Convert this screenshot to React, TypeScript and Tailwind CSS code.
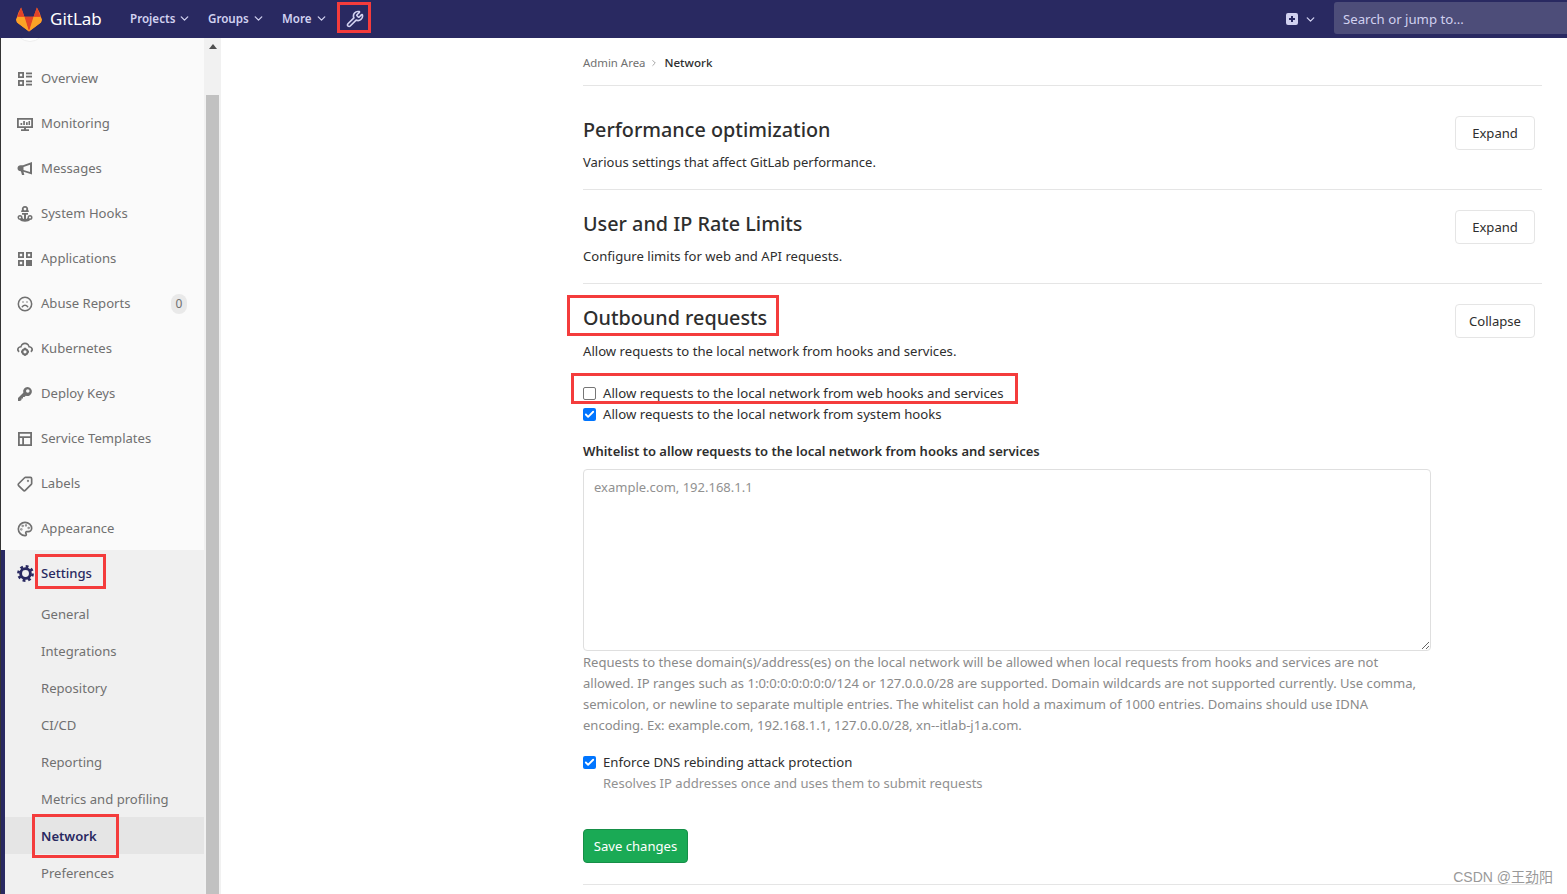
import React from "react";
import { Wrench, ChevronDown, Frown, Tag, Palette, ChevronRight, Check } from "lucide-react";

const Ic = ({ children }: { children: React.ReactNode }) => (
  <svg width="16" height="16" viewBox="0 0 16 16" fill="currentColor" className="shrink-0">{children}</svg>
);

const OverviewIcon = () => (
  <Ic>
    <path fillRule="evenodd" d="M1 1h6v6H1V1zm1.800 1.800v2.400h2.400V2.800H2.800zM1 9h6v6H1V9zm1.800 1.800v2.400h2.400v-2.400H2.800z" />
    <rect x="9" y="1.500" width="6" height="1.800" /><rect x="9" y="4.700" width="6" height="1.800" />
    <rect x="9" y="9.500" width="6" height="1.800" /><rect x="9" y="12.700" width="6" height="1.800" />
  </Ic>
);
const MonitorIcon = () => (
  <Ic>
    <path fillRule="evenodd" d="M0 2h16v10H9v1.200h3V15H4v-1.800h3V12H0V2zm1.800 1.800v6.400h12.400V3.800H1.800z" />
    <rect x="3.500" y="7" width="1.700" height="2" /><rect x="6.200" y="5" width="1.700" height="4" /><rect x="9" y="6.200" width="1.700" height="2.800" /><rect x="11.500" y="5" width="1.500" height="4" />
  </Ic>
);
const MegaphoneIcon = () => (
  <Ic>
    <path fillRule="evenodd" d="M15 1v12.500L6.500 10.800 7.300 14H5L3.900 10.300C2 10.200.5 9.300.5 7.300S2 4.200 3.500 4.200H6L15 1zm-2 2.700L6.500 5.900v3l6.500 2V3.700z" />
  </Ic>
);
const HookIcon = () => (
  <Ic>
    <path fillRule="evenodd" d="M8 0a3.200 3.200 0 0 1 3 4.300l.8.100V6H4.200V4.400L5 4.300A3.200 3.200 0 0 1 8 0zm0 1.700a1.400 1.400 0 1 0 0 2.800 1.400 1.400 0 0 0 0-2.800z" />
    <rect x="5" y="7" width="6" height="1.700" />
    <path d="M7 8h2v6H7z" />
    <path fillRule="evenodd" d="M3 9a2.500 2.500 0 0 1 2.500 2.500c0 .9.600 1.500 2.500 1.500s2.500-.6 2.500-1.500A2.500 2.500 0 1 1 13 14c-.7 1-2.500 1.700-5 1.700S3.700 15 3 14a2.500 2.500 0 0 1 0-5zm0 1.500a1 1 0 1 0 0 2 1 1 0 0 0 0-2zm10 0a1 1 0 1 0 0 2 1 1 0 0 0 0-2z" />
  </Ic>
);
const AppsIcon = () => (
  <Ic>
    <path fillRule="evenodd" d="M1 1h6v6H1V1zm1.800 1.800v2.400h2.400V2.800H2.800zM9 1h6v6H9V1zm1.800 1.800v2.400h2.400V2.800h-2.400zM1 9h6v6H1V9zm1.800 1.800v2.400h2.400v-2.400H2.800z" />
    <rect x="9" y="9" width="6" height="6" />
  </Ic>
);
const KubeIcon = () => (
  <Ic>
    <path fillRule="evenodd" d="M8 1.500c2.300 0 4 1.400 4.500 3.400C14.500 5.200 16 6.700 16 8.500c0 1.300-.7 2.300-1.800 2.900l-.8-1.500c.6-.3.900-.8.900-1.400 0-1-.9-1.900-2.100-1.900h-.8l-.1-.8C11 4.300 9.700 3.200 8 3.200S5 4.300 4.700 5.800l-.1.800h-.8c-1.200 0-2.100.9-2.100 1.900 0 .6.300 1.100.9 1.400l-.8 1.500C.7 10.800 0 9.800 0 8.500c0-1.800 1.500-3.300 3.500-3.600C4 2.900 5.700 1.500 8 1.500z" />
    <circle cx="8" cy="10.800" r="2.600" fill="none" stroke="currentColor" strokeWidth="2" />
    <path d="M7 6.800h2v1.500H7zM7 13.200h2v1.600H7zM4 9.800h1.400v2H4zM10.600 9.800H12v2h-1.400z" />
  </Ic>
);
const KeyIcon = () => (
  <Ic>
    <path fillRule="evenodd" d="M10.500 1a4.500 4.500 0 1 1-1.700 8.700L7.500 11H6v1.500H4.500V14L3 15H1v-3l5.300-5.300A4.500 4.500 0 0 1 10.500 1zm.3 2.200a1.800 1.800 0 1 0 0 3.600 1.800 1.800 0 0 0 0-3.600z" />
  </Ic>
);
const TemplateIcon = () => (
  <Ic>
    <path fillRule="evenodd" d="M1 1h14v14H1V1zm1.800 1.800v2.400h10.400V2.800H2.800zm0 4.200v6.200h2.400V7H2.800zm4.200 0v6.200h6.200V7H7z" />
  </Ic>
);
const GearIcon = () => (
  <svg width="17" height="17" viewBox="0 0 16 16" fill="none" stroke="currentColor" className="shrink-0">
    <circle cx="8" cy="8" r="4.600" strokeWidth="2.700" />
    <circle cx="8" cy="8" r="6.700" strokeWidth="2.400" strokeDasharray="2.630 2.630" />
  </svg>
);

const Gitlab = () => (
  <svg width="26" height="25" viewBox="0 0 26 25">
    <path fill="#fc6d26" d="M13 24.500 1 15.500.1 12.700 2.400 5.500l2.700-5 3.300 9.200h9.200l3.300-9.200 2.700 5 2.300 7.200-.900 2.800z" />
    <path fill="#e24329" d="M13 24.500 8.400 9.700h9.200L13 24.500z" />
    <path fill="#fca326" d="M1.500 9.700H8.400L13 24.500 1 15.500.1 12.700zM24.500 9.700h-6.900L13 24.500l12-9 .900-2.800z" />
    <path fill="#e24329" d="M1.500 9.700h6.900L5.100.5zM24.500 9.700h-6.900L20.900.5z" />
  </svg>
);

const items: [string, React.ReactNode][] = [
  ["Overview", <OverviewIcon />],
  ["Monitoring", <MonitorIcon />],
  ["Messages", <MegaphoneIcon />],
  ["System Hooks", <HookIcon />],
  ["Applications", <AppsIcon />],
  ["Abuse Reports", <Frown size={16} strokeWidth={2.3} className="shrink-0" />],
  ["Kubernetes", <KubeIcon />],
  ["Deploy Keys", <KeyIcon />],
  ["Service Templates", <TemplateIcon />],
  ["Labels", <Tag size={16} strokeWidth={2.5} className="shrink-0 -scale-x-100" />],
  ["Appearance", <Palette size={16} strokeWidth={2.5} className="shrink-0" />],
];

const subs = ["General", "Integrations", "Repository", "CI/CD", "Reporting", "Metrics and profiling", "Network", "Preferences"];

const Mark = ({ className }: { className: string }) => (
  <div className={"absolute border-[3px] border-[#f43c3c] pointer-events-none " + className} />
);

const Box = ({ checked }: { checked: boolean }) =>
  checked ? (
    <span className="w-[13px] h-[13px] rounded-[2px] bg-[#0075ff] flex items-center justify-center shrink-0">
      <Check size={11} strokeWidth={4} color="#fff" />
    </span>
  ) : (
    <span className="w-[13px] h-[13px] rounded-[2px] border border-[#767676] bg-white shrink-0" />
  );

export default function App() {
  return (
    <div className="relative w-[1567px] h-[894px] overflow-hidden bg-white flex flex-col font-['Noto_Sans','Liberation_Sans',sans-serif]">
      <header className="h-[38px] shrink-0 bg-[#292961] flex items-center text-[#d1d1f0]">
        <div className="ml-[16px] w-[26px] flex"><Gitlab /></div>
        <span className="ml-[8px] text-[17px] text-white w-[60px]">GitLab</span>
        <nav className="ml-[20px] flex items-center text-[11.6px] font-semibold">
          <span className="flex items-center gap-[3px] w-[78px]">Projects <ChevronDown size={13} strokeWidth={2.4} /></span>
          <span className="flex items-center gap-[3px] w-[74px]">Groups <ChevronDown size={13} strokeWidth={2.4} /></span>
          <span className="flex items-center gap-[3px] w-[64px]">More <ChevronDown size={13} strokeWidth={2.4} /></span>
          <Wrench size={18} strokeWidth={2.2} />
        </nav>
        <div className="ml-auto flex items-center h-full">
          <svg width="12" height="12" viewBox="0 0 12 12"><path fill="#d1d1f0" fillRule="evenodd" d="M2 0h8a2 2 0 0 1 2 2v8a2 2 0 0 1-2 2H2a2 2 0 0 1-2-2V2a2 2 0 0 1 2-2zm3 3v2H3v2h2v2h2V7h2V5H7V3H5z" /></svg>
          <ChevronDown size={13} strokeWidth={2.4} className="ml-[6px]" />
          <div className="ml-[17px] self-start mt-[2px] w-[233px] h-[32px] rounded-l-[3px] bg-[#4d4d79] flex items-center pl-[9px] pt-[3px] text-[13.2px] text-[#d1d1f0]">Search or jump to...</div>
        </div>
      </header>

      <div className="flex flex-1 min-h-0">
        <aside className="w-[221px] shrink-0 flex border-l border-l-[#333] overflow-hidden">
          <div className="w-[203px] bg-[#fafafa] relative pt-[17px] text-[13.1px] text-[#707070]">
            <div className="absolute left-[14px] -top-[26px] w-[30px] h-[30px] rounded-full bg-white border border-[#eee]" />
            {items.map(([label, icon]) => (
              <div key={label} className="h-[45px] flex items-center pl-[16px] pt-[2px] gap-[8px]">
                {icon}
                <span className="flex-1">{label}</span>
                {label === "Abuse Reports" && (
                  <span className="mr-[17px] w-[16px] h-[20px] rounded-full bg-[#e9e9e9] text-[12px] flex items-center justify-center">0</span>
                )}
              </div>
            ))}
            <div className="bg-[#f0f0f0] border-l-[4px] border-[#292961] h-[400px]">
              <div className="h-[45px] flex items-center pl-[12px] pt-[2px] gap-[7px] text-[#292961] font-medium">
                <GearIcon />
                <span>Settings</span>
              </div>
              {subs.map((s) => (
                <div key={s} className={"h-[37px] flex items-center pl-[36px] pt-[2px] " + (s === "Network" ? "bg-[#e5e5e5] text-[#292961] font-semibold" : "")}>{s}</div>
              ))}
            </div>
          </div>
          <div className="w-[17px] bg-[#f1f1f1] flex flex-col items-center">
            <div className="mt-[6px] w-0 h-0 border-x-[4px] border-x-transparent border-b-[5px] border-b-[#505050]" />
            <div className="mt-[46px] w-[13px] flex-1 bg-[#c1c1c1]" />
          </div>
        </aside>

        <main className="flex-1 pl-[362px] pr-[25px] min-w-0">
          <div className="h-[48px] border-b border-[#e5e5e5] flex items-center pt-[2px] text-[11.4px] text-[#707070]">
            <span>Admin Area</span>
            <ChevronRight size={10} strokeWidth={1.5} className="mx-[4px]" />
            <span className="ml-[1px] font-medium text-[11.6px] text-[#2e2e2e]">Network</span>
          </div>
          <section className="h-[104px] border-b border-[#e5e5e5] flex items-start">
            <div className="flex-1">
              <h4 className="text-[19.8px] leading-[30px] font-medium text-[#2e2e2e] mt-[29px]">Performance optimization</h4>
              <p className="text-[13px] leading-[20px] text-[#2e2e2e] mt-[7px]">Various settings that affect GitLab performance.</p>
            </div>
            <button className="mt-[30px] mr-[7px] w-[80px] h-[34px] pt-[2px] rounded-[4px] border border-[#e5e5e5] bg-white text-[13.1px] text-[#2e2e2e]">Expand</button>
          </section>
          <section className="h-[94px] border-b border-[#e5e5e5] flex items-start">
            <div className="flex-1">
              <h4 className="text-[19.8px] leading-[30px] font-medium text-[#2e2e2e] mt-[19px]">User and IP Rate Limits</h4>
              <p className="text-[13.1px] leading-[20px] text-[#2e2e2e] mt-[7px]">Configure limits for web and API requests.</p>
            </div>
            <button className="mt-[20px] mr-[7px] w-[80px] h-[34px] pt-[2px] rounded-[4px] border border-[#e5e5e5] bg-white text-[13.1px] text-[#2e2e2e]">Expand</button>
          </section>
          <section className="flex items-start">
            <div className="w-[848px]">
              <h4 className="text-[19.8px] leading-[30px] font-medium text-[#2e2e2e] mt-[19px]">Outbound requests</h4>
              <p className="text-[13.15px] leading-[20px] text-[#2e2e2e] mt-[8px]">Allow requests to the local network from hooks and services.</p>
              <div className="mt-[22px] flex items-center gap-[7px] h-[21px] text-[13.2px] text-[#2e2e2e]"><Box checked={false} />Allow requests to the local network from web hooks and services</div>
              <div className="flex items-center gap-[7px] h-[21px] text-[13.2px] text-[#2e2e2e]"><Box checked />Allow requests to the local network from system hooks</div>
              <div className="mt-[16px] h-[21px] leading-[21px] text-[13px] font-semibold text-[#2e2e2e]">Whitelist to allow requests to the local network from hooks and services</div>
              <textarea readOnly placeholder="example.com, 192.168.1.1" className="mt-[7px] block w-full h-[182px] rounded-[4px] border border-[#dfdfdf] px-[10px] py-[7px] text-[13px] leading-[20px] placeholder:text-[#919191] outline-none" />
              <p className="mt-[1px] text-[13.05px] leading-[21px] text-[#8a8a8a]">Requests to these domain(s)/address(es) on the local network will be allowed when local requests from hooks and services are not allowed. IP ranges such as 1:0:0:0:0:0:0:0/124 or 127.0.0.0/28 are supported. Domain wildcards are not supported currently. Use comma, semicolon, or newline to separate multiple entries. The whitelist can hold a maximum of 1000 entries. Domains should use IDNA encoding. Ex: example.com, 192.168.1.1, 127.0.0.0/28, xn--itlab-j1a.com.</p>
              <div className="mt-[16px] flex items-center gap-[7px] h-[21px] text-[13.2px] text-[#2e2e2e]"><Box checked />Enforce DNS rebinding attack protection</div>
              <div className="pl-[20px] h-[21px] leading-[21px] text-[13.05px] text-[#919191]">Resolves IP addresses once and uses them to submit requests</div>
              <button className="mt-[35px] block w-[105px] h-[34px] pt-[2px] rounded-[4px] bg-[#1aaa55] border border-[#168f48] text-[13.1px] text-white">Save changes</button>
            </div>
            <div className="flex-1 flex justify-end">
              <button className="mt-[20px] mr-[7px] w-[80px] h-[34px] pt-[2px] rounded-[4px] border border-[#e5e5e5] bg-white text-[13.1px] text-[#2e2e2e]">Collapse</button>
            </div>
          </section>
          <div className="mt-[21px] border-b border-[#e5e5e5] relative">
            <span className="absolute right-[-11px] -top-[15px] text-[14px] leading-[16px] text-[#999] font-['Liberation_Sans','Noto_Sans_CJK_SC',sans-serif]">CSDN @王劲阳</span>
          </div>
        </main>
      </div>

      <Mark className="left-[337px] top-[2px] w-[34px] h-[31px]" />
      <Mark className="left-[567px] top-[295px] w-[212px] h-[41px]" />
      <Mark className="left-[571px] top-[373px] w-[447px] h-[31px]" />
      <Mark className="left-[35px] top-[554px] w-[71px] h-[35px]" />
      <Mark className="left-[32px] top-[814px] w-[87px] h-[44px]" />
    </div>
  );
}
